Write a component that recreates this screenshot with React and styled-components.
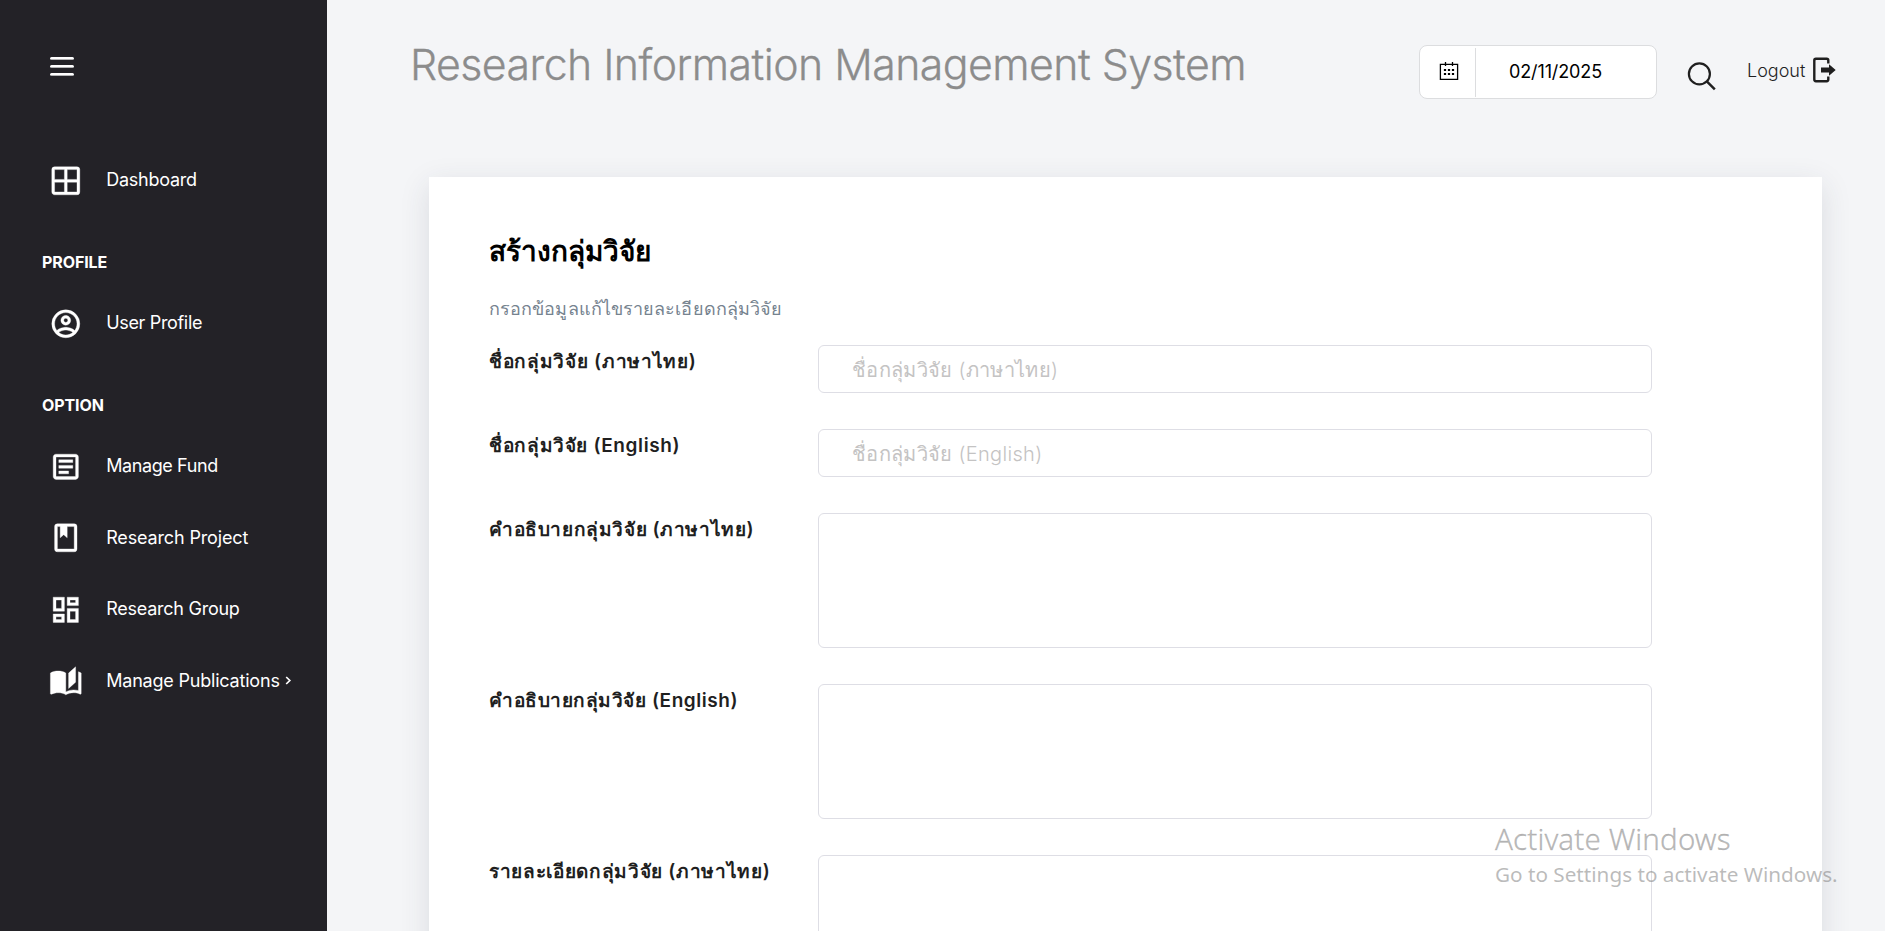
import React from 'react';
import styled, { createGlobalStyle } from 'styled-components';

const Global = createGlobalStyle`
  *, *::before, *::after { box-sizing: border-box; }
  html, body { margin: 0; padding: 0; overflow: hidden; }
  body { background: #f4f5f7; font-family: Inter, "Liberation Sans", sans-serif; color: #1f1f1f; }
`;

const Page = styled.div`
  position: relative;
  display: flex;
  height: 931px;
  overflow: hidden;
`;

const Sidebar = styled.nav`
  flex: 0 0 327px;
  background: #232227;
  color: #fff;
  padding-top: 57px;
`;

const MenuButton = styled.button`
  display: flex;
  flex-direction: column;
  gap: 5px;
  width: 24px;
  height: 19px;
  margin: 0 0 68px 49.5px;
  padding: 0;
  border: 0;
  background: none;
`;

const MenuLine = styled.span`
  height: 3px;
  border-radius: 1.5px;
  background: linear-gradient(#fff 2px, #b4b4b6 2px);
`;

const NavItem = styled.a`
  display: flex;
  align-items: center;
  height: 71.5px;
  padding-left: 49.4px;
  font-size: 18px;
  font-weight: 400;
  letter-spacing: ${(p) => p.$tracking}px;
  white-space: nowrap;
  svg:first-child {
    flex: none;
    width: 33.6px;
    height: 33.6px;
    margin: 1.6px 23.2px 0 0;
    fill: currentColor;
  }
`;

const Chevron = styled.svg`
  width: 7px;
  height: 9px;
  margin-left: 5px;
  fill: none;
  stroke: currentColor;
  stroke-width: 1.7;
`;

const NavHeading = styled.div`
  display: flex;
  align-items: center;
  height: 71.5px;
  padding: 21.5px 0 0 42px;
  font-size: 16px;
  font-weight: 700;
  letter-spacing: -0.1px;
`;

const Main = styled.div`
  flex: 1;
  min-width: 0;
`;

const Header = styled.header`
  display: flex;
  align-items: flex-start;
  height: 177px;
  padding: 45px 48px 0 83px;
`;

const Title = styled.h1`
  width: 1009px;
  margin: 0;
  font-size: 42.8px;
  line-height: 40px;
  font-weight: 300;
  letter-spacing: -0.54px;
  white-space: nowrap;
  color: #8c8c8c;
  -webkit-text-stroke: 0.3px #8c8c8c;
`;

const DateBox = styled.div`
  display: flex;
  align-items: center;
  width: 238px;
  height: 54px;
  border: 1px solid #dcdddf;
  border-radius: 8px;
  background: #fff;
`;

const DateAddon = styled.span`
  display: flex;
  align-items: center;
  justify-content: center;
  width: 56px;
  height: 49px;
  padding: 0 0 2px 2px;
  border-right: 1px solid #dcdddf;
`;

const DateValue = styled.span`
  padding: 0 0 2px 33px;
  font-size: 18px;
  letter-spacing: -0.12px;
  color: #000;
`;

const SearchButton = styled.span`
  margin: 16px 0 0 30px;
  line-height: 0;
`;

const Logout = styled.a`
  display: flex;
  align-items: center;
  margin: 11px 0 0 30px;
  font-size: 18px;
  font-weight: 300;
  letter-spacing: 0;
  svg { margin-left: 6.5px; }
`;

const Card = styled.section`
  width: 1393px;
  height: 800px;
  margin-left: 102px;
  padding: 50px 0 0 60px;
  background: #fff;
  box-shadow: 0 8px 28px rgba(45, 55, 75, 0.13);
`;

const CardTitle = styled.h2`
  margin: 0;
  font-size: 28px;
  line-height: 48px;
  font-weight: 700;
  color: #000;
`;

const CardHint = styled.p`
  margin: 18px 0 20px;
  font-size: 18px;
  line-height: 32px;
  letter-spacing: 0.08px;
  color: #76838f;
`;

const FormRow = styled.div`
  display: grid;
  grid-template-columns: 329px 834px;
  align-items: start;
  margin-bottom: 36px;
`;

const Label = styled.label`
  padding-top: 1px;
  font-size: 19px;
  line-height: 32px;
  font-weight: 600;
  letter-spacing: ${(p) => p.$tracking}px;
  white-space: nowrap;
`;

const TextInput = styled.input`
  width: 100%;
  height: 48px;
  padding: 2px 33px 0;
  border: 1px solid #dedee5;
  border-radius: 6px;
  font: 300 20px Inter, "Liberation Sans", sans-serif;
  letter-spacing: 0.32px;
  &::placeholder { color: #c4c3c3; opacity: 1; }
`;

const TextArea = styled.textarea`
  display: block;
  width: 100%;
  height: 135px;
  border: 1px solid #dedee5;
  border-radius: 6px;
  resize: none;
`;

const Watermark = styled.aside`
  position: absolute;
  left: 1495px;
  top: 819px;
  font-family: "Noto Sans", sans-serif;
  white-space: nowrap;
  color: rgba(120, 120, 120, 0.5);
`;

const WatermarkTitle = styled.div`
  font-size: 29.5px;
  line-height: 40px;
  font-weight: 300;
  letter-spacing: 0.13px;
  -webkit-text-stroke: 0.3px rgba(120, 120, 120, 0.5);
`;

const WatermarkText = styled.div`
  font-size: 20.7px;
  line-height: 31px;
  font-weight: 400;
`;

const icons = {
  grid: 'M4,2H20A2,2 0 0,1 22,4V20A2,2 0 0,1 20,22H4C2.92,22 2,21.1 2,20V4A2,2 0 0,1 4,2M4,4V11H11V4H4M4,20H11V13H4V20M20,20V13H13V20H20M20,4H13V11H20V4Z',
  user: 'M12,2A10,10 0 0,0 2,12A10,10 0 0,0 12,22A10,10 0 0,0 22,12A10,10 0 0,0 12,2M7.07,18.28C7.5,17.38 10.12,16.5 12,16.5C13.88,16.5 16.5,17.38 16.93,18.28C15.57,19.36 13.86,20 12,20C10.14,20 8.43,19.36 7.07,18.28M18.36,16.83C16.93,15.09 13.46,14.5 12,14.5C10.54,14.5 7.07,15.09 5.64,16.83C4.62,15.5 4,13.82 4,12C4,7.59 7.59,4 12,4C16.41,4 20,7.59 20,12C20,13.82 19.38,15.5 18.36,16.83M12,6C10.06,6 8.5,7.56 8.5,9.5C8.5,11.44 10.06,13 12,13C13.94,13 15.5,11.44 15.5,9.5C15.5,7.56 13.94,6 12,6M12,11A1.5,1.5 0 0,1 10.5,9.5A1.5,1.5 0 0,1 12,8A1.5,1.5 0 0,1 13.5,9.5A1.5,1.5 0 0,1 12,11Z',
  fund: 'M5,3C3.89,3 3,3.89 3,5V19C3,20.11 3.89,21 5,21H19C20.11,21 21,20.11 21,19V5C21,3.89 20.11,3 19,3H5M5,5H19V19H5V5M7,7V9H17V7H7M7,11V13H17V11H7M7,15V17H14V15H7Z',
  book: 'M18,2A2,2 0 0,1 20,4V20A2,2 0 0,1 18,22H6A2,2 0 0,1 4,20V4A2,2 0 0,1 6,2H18M18,4H13V12L10.5,9.75L8,12V4H6V20H18V4Z',
  group: 'M19,5V7H15V5H19M9,5V11H5V5H9M19,13V19H15V13H19M9,17V19H5V17H9M21,3H13V9H21V3M11,3H3V13H11V3M21,11H13V21H21V11M11,15H3V21H11V15Z',
  publications: 'M19 2L14 6.5V17.5L19 13V2M6.5 5C4.55 5 2.45 5.4 1 6.5V21.16C1 21.41 1.25 21.66 1.5 21.66C1.6 21.66 1.65 21.59 1.75 21.59C3.1 20.94 5.05 20.5 6.5 20.5C8.45 20.5 10.55 20.9 12 22C13.35 21.15 15.8 20.5 17.5 20.5C19.15 20.5 20.85 20.81 22.25 21.56C22.35 21.61 22.4 21.59 22.5 21.59C22.75 21.59 23 21.34 23 21.09V6.5C22.4 6.05 21.75 5.75 21 5.5V19C19.9 18.65 18.7 18.5 17.5 18.5C15.8 18.5 13.35 19.15 12 20V6.5C10.55 5.4 8.45 5 6.5 5Z',
};

function NavLink({ icon, tracking = -0.25, expandable, children }) {
  return (
    <NavItem $tracking={tracking}>
      <svg viewBox="0 0 24 24"><path fillRule="evenodd" d={icons[icon]} stroke="currentColor" strokeWidth="0.25" /></svg>
      <span>{children}</span>
      {expandable && <Chevron viewBox="0 0 7 9"><path d="M1.2 1l3.6 3.5L1.2 8" /></Chevron>}
    </NavItem>
  );
}

const CalendarIcon = () => (
  <svg width="20" height="20" viewBox="0 0 20 20" fill="none" stroke="#000" strokeWidth="1.3">
    <path d="M1.4 3.3h17.2v15H1.4zM6.5 1v4M13.5 1v4" />
    <path d="M4.9 8.9h2.2M8.9 8.9h2.2M12.9 8.9h2.2M4.9 13h2.2M8.9 13h2.2M12.9 13h2.2" strokeWidth="2" />
  </svg>
);

const SearchIcon = () => (
  <svg width="30" height="30" viewBox="0 0 30 30" fill="none" stroke="#1f1f1f" strokeWidth="2.2">
    <circle cx="12.4" cy="12.9" r="10.5" />
    <path d="M19.8 20.4l8 7.9" strokeWidth="2.5" />
  </svg>
);

const LogoutIcon = () => (
  <svg width="25" height="28" viewBox="0 0 25 28">
    <path d="M16.3 7.5V4.4Q16.3 2.8 14.7 2.8H3.9Q2.3 2.8 2.3 4.4v19.2q0 1.6 1.6 1.6h10.8q1.6 0 1.6-1.6v-3.1" fill="none" stroke="#1f1f1f" strokeWidth="2.4" />
    <path d="M9 11.4h8V8.2l6.7 5.8-6.7 5.8v-3.2H9z" fill="#1f1f1f" />
  </svg>
);

const fields = [
  { label: 'ชื่อกลุ่มวิจัย (ภาษาไทย)', tracking: 0.7, input: true },
  { label: 'ชื่อกลุ่มวิจัย (English)', tracking: 0.63, input: true },
  { label: 'คำอธิบายกลุ่มวิจัย (ภาษาไทย)', tracking: 0.6 },
  { label: 'คำอธิบายกลุ่มวิจัย (English)', tracking: 0.55 },
  { label: 'รายละเอียดกลุ่มวิจัย (ภาษาไทย)', tracking: 0.66 },
];

export default function App() {
  return (
    <>
      <Global />
      <Page>
        <Sidebar>
          <MenuButton aria-label="Menu"><MenuLine /><MenuLine /><MenuLine /></MenuButton>
          <NavLink icon="grid">Dashboard</NavLink>
          <NavHeading>PROFILE</NavHeading>
          <NavLink icon="user" tracking={-0.33}>User Profile</NavLink>
          <NavHeading>OPTION</NavHeading>
          <NavLink icon="fund" tracking={-0.4}>Manage Fund</NavLink>
          <NavLink icon="book" tracking={-0.15}>Research Project</NavLink>
          <NavLink icon="group" tracking={-0.25}>Research Group</NavLink>
          <NavLink icon="publications" tracking={-0.2} expandable>Manage Publications</NavLink>
        </Sidebar>
        <Main>
          <Header>
            <Title>Research Information Management System</Title>
            <DateBox>
              <DateAddon><CalendarIcon /></DateAddon>
              <DateValue>02/11/2025</DateValue>
            </DateBox>
            <SearchButton><SearchIcon /></SearchButton>
            <Logout>Logout<LogoutIcon /></Logout>
          </Header>
          <Card>
            <CardTitle>สร้างกลุ่มวิจัย</CardTitle>
            <CardHint>กรอกข้อมูลแก้ไขรายละเอียดกลุ่มวิจัย</CardHint>
            {fields.map((f) => (
              <FormRow key={f.label}>
                <Label $tracking={f.tracking}>{f.label}</Label>
                {f.input ? <TextInput placeholder={f.label} /> : <TextArea />}
              </FormRow>
            ))}
          </Card>
        </Main>
        <Watermark>
          <WatermarkTitle>Activate Windows</WatermarkTitle>
          <WatermarkText>Go to Settings to activate Windows.</WatermarkText>
        </Watermark>
      </Page>
    </>
  );
}
